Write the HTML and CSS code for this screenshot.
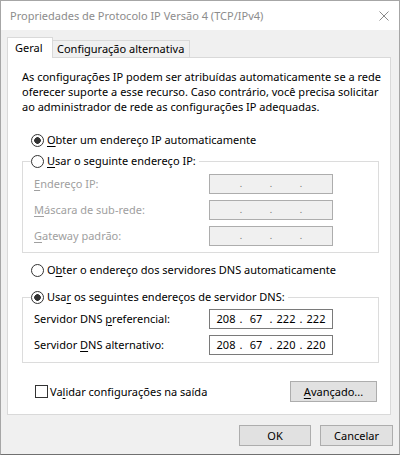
FILE: index.html
```html
<!DOCTYPE html>
<html lang="pt-BR">
<head>
    <meta charset="utf-8">
    <title>Propriedades de Protocolo IP Versão 4 (TCP/IPv4)</title>
    <link rel="stylesheet" href="styles.css">
</head>
<body>
    <div class="window">
        <div class="titlebar">
            <span class="title">Propriedades de Protocolo IP Versão 4 (TCP/IPv4)</span>
            <svg class="close" width="10" height="10" viewBox="0 0 10 10">
                <path d="M0.5 0.5L9.5 9.5M9.5 0.5L0.5 9.5" />
            </svg>
        </div>
        <div class="content">
            <div class="tabs">
                <div class="tab active">Geral</div>
                <div class="tab">Configuração alternativa</div>
            </div>
            <div class="panel">
                <p class="intro">As configurações IP podem ser atribuídas automaticamente se a rede<br>oferecer suporte a esse recurso. Caso contrário, você precisa solicitar<br>ao administrador de rede as configurações IP adequadas.</p>

                <div class="option ip-auto"><span class="radio checked"></span><span><u>O</u>bter um endereço IP automaticamente</span></div>
                <fieldset class="group ip-group disabled">
                    <legend><span class="radio"></span><span><u>U</u>sar o seguinte endereço IP:</span></legend>
                    <div class="field">
                        <span class="label"><u>E</u>ndereço IP:</span>
                        <div class="ipbox"><span class="seg"></span><span class="dot">.</span><span class="seg"></span><span class="dot">.</span><span class="seg"></span><span class="dot">.</span><span class="seg"></span></div>
                    </div>
                    <div class="field">
                        <span class="label"><u>M</u>áscara de sub-rede:</span>
                        <div class="ipbox"><span class="seg"></span><span class="dot">.</span><span class="seg"></span><span class="dot">.</span><span class="seg"></span><span class="dot">.</span><span class="seg"></span></div>
                    </div>
                    <div class="field">
                        <span class="label"><u>G</u>ateway padrão:</span>
                        <div class="ipbox"><span class="seg"></span><span class="dot">.</span><span class="seg"></span><span class="dot">.</span><span class="seg"></span><span class="dot">.</span><span class="seg"></span></div>
                    </div>
                </fieldset>

                <div class="option dns-auto"><span class="radio"></span><span>O<u>b</u>ter o endereço dos servidores DNS automaticamente</span></div>
                <fieldset class="group dns-group">
                    <legend><span class="radio checked"></span><span>Usa<u>r</u> os seguintes endereços de servidor DNS:</span></legend>
                    <div class="field">
                        <span class="label">Servidor DNS <u>p</u>referencial:</span>
                        <div class="ipbox"><span class="seg">208</span><span class="dot">.</span><span class="seg">67</span><span class="dot">.</span><span class="seg">222</span><span class="dot">.</span><span class="seg">222</span></div>
                    </div>
                    <div class="field">
                        <span class="label">Servidor <u>D</u>NS alternativo:</span>
                        <div class="ipbox"><span class="seg">208</span><span class="dot">.</span><span class="seg">67</span><span class="dot">.</span><span class="seg">220</span><span class="dot">.</span><span class="seg">220</span></div>
                    </div>
                </fieldset>

                <div class="panel-footer">
                    <div class="check"><span class="box"></span><span>Va<u>l</u>idar configurações na saída</span></div>
                    <button class="btn advanced"><u>A</u>vançado...</button>
                </div>
            </div>
            <div class="actions">
                <button class="btn ok">OK</button>
                <button class="btn cancel">Cancelar</button>
            </div>
        </div>
    </div>
</body>
</html>
```

FILE: styles.css
```css
html,
body,
p,
fieldset,
legend
{
    margin: 0;
    padding: 0;
}

body
{
    background: #f0f0f0;
    font: 11px/16px "Noto Sans", "Open Sans", sans-serif;
    color: #000;
}

u
{
    text-decoration-thickness: 1px;
    text-underline-offset: 2px;
}

.window
{
    box-sizing: border-box;
    width: 400px;
    height: 455px;
    border: 1px solid #a6a6a6;
    border-bottom-color: #707070;
    background: #f0f0f0;
}

/* barra de título (janela inativa) */
.titlebar
{
    height: 29px;
    display: flex;
    align-items: center;
    justify-content: space-between;
    padding: 0 10px 0 9px;
    background: #fff;
}

    .titlebar .title
    {
        color: #8c8c8c;
        font-size: 11px;
    }

    .titlebar .close path
    {
        stroke: #8a8a8a;
        stroke-width: 1;
        fill: none;
    }

.content
{
    padding: 7px 0 0 6px;
}

/* abas */
.tabs
{
    display: flex;
    align-items: flex-start;
    height: 21px;
    margin-bottom: -1px;
}

    .tabs .tab
    {
        box-sizing: border-box;
        border: 1px solid #d9d9d9;
        border-bottom: none;
        line-height: 16px;
    }

        .tabs .tab.active
        {
            position: relative;
            z-index: 1;
            width: 46px;
            height: 21px;
            padding: 2px 0 0 7px;
            background: #fff;
        }

        .tabs .tab:not(.active)
        {
            width: 137px;
            height: 17px;
            margin-top: 3px;
            padding: 0 0 0 4px;
            border-left: none;
            background: #f0f0f0;
        }

.panel
{
    box-sizing: border-box;
    width: 384px;
    height: 358px;
    padding: 11px 0 12px 14px;
    border: 1px solid #d9d9d9;
    background: #fff;
}

    .panel .intro
    {
        line-height: 15px;
    }

.option,
.group legend
{
    display: flex;
    align-items: center;
    height: 16px;
}

.option
{
    padding-left: 9px;
}

    .option.ip-auto
    {
        margin-top: 18px;
    }

    .option.dns-auto
    {
        margin-top: 9px;
    }

.radio
{
    box-sizing: border-box;
    width: 13px;
    height: 13px;
    margin-right: 3px;
    border: 1px solid #333;
    border-radius: 50%;
    background: #fff;
}

    .radio.checked
    {
        background: radial-gradient(circle, #333 0 3px, #fff 3.6px);
    }

/* caixas de grupo */
.group
{
    box-sizing: border-box;
    width: 357px;
    border: 1px solid #dcdcdc;
    padding: 5px 0 6px 11px;
}

    .group legend
    {
        margin-left: -3px;
        padding: 0 3px 0 0;
    }

    .group.ip-group
    {
        margin-top: 5px;
    }

    .group.dns-group
    {
        margin-top: 11px;
        padding: 4px 0 7px 11px;
    }

    .group .field
    {
        display: flex;
        align-items: center;
        height: 20px;
    }

        .group .field + .field
        {
            margin-top: 6px;
        }

    .group .label
    {
        width: 175px;
    }

    .group.disabled .label
    {
        color: #a0a0a0;
    }

/* campo de endereço IP */
.ipbox
{
    box-sizing: border-box;
    display: flex;
    width: 124px;
    height: 20px;
    padding-left: 4px;
    border: 1px solid #7a7a7a;
    background: #fff;
    line-height: 18px;
}

    .ipbox .seg
    {
        width: 24px;
        text-align: center;
    }

    .ipbox .dot
    {
        width: 6px;
        text-align: center;
    }

.disabled .ipbox
{
    border-color: #adadad;
    background: #f0f0f0;
    color: #6d6d6d;
    font-size: 9px;
}

.panel-footer
{
    display: flex;
    align-items: center;
    justify-content: space-between;
    height: 21px;
    margin: 18px 13px 0 13px;
}

    .panel-footer .check
    {
        display: flex;
        align-items: center;
    }

        .panel-footer .check .box
        {
            box-sizing: border-box;
            width: 13px;
            height: 13px;
            margin-right: 2px;
            border: 1px solid #333;
            background: #fff;
        }

/* botões */
.btn
{
    box-sizing: border-box;
    height: 21px;
    padding: 0;
    border: 1px solid #adadad;
    background: #e1e1e1;
    font: inherit;
    color: #000;
}

    .btn.advanced
    {
        width: 87px;
    }

    .btn.ok
    {
        width: 72px;
    }

    .btn.cancel
    {
        width: 73px;
    }

.actions
{
    display: flex;
    justify-content: flex-end;
    gap: 9px;
    width: 386px;
    margin-top: 10px;
}
```
